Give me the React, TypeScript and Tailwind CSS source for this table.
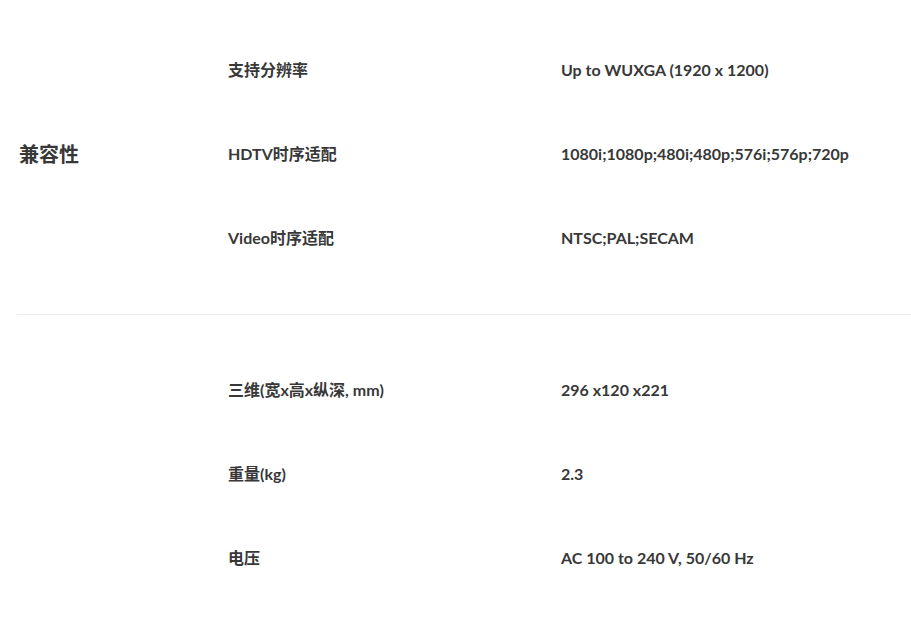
import React from 'react';

interface SpecRow {
    name: string;
    value: string;
}

interface SpecSection {
    title: string;
    rows: SpecRow[];
}

const sections: SpecSection[] = [
    {
        title: '兼容性',
        rows: [
            { name: '支持分辨率', value: 'Up to WUXGA (1920 x 1200)' },
            { name: 'HDTV时序适配', value: '1080i;1080p;480i;480p;576i;576p;720p' },
            { name: 'Video时序适配', value: 'NTSC;PAL;SECAM' },
        ],
    },
    {
        title: '',
        rows: [
            { name: '三维(宽x高x纵深, mm)', value: '296 x120 x221' },
            { name: '重量(kg)', value: '2.3' },
            { name: '电压', value: 'AC 100 to 240 V, 50/60 Hz' },
        ],
    },
];

const font = { fontFamily: 'Lato, "Noto Sans CJK SC", sans-serif' };

function Section({ section, first }: { section: SpecSection; first: boolean }) {
    return (
        <div className={`flex ${first ? 'pt-[28px] pb-[34px] border-b border-[#ebebeb]' : 'pt-[33px]'}`}>
            <div className="w-[211px] shrink-0 flex items-center pl-[2px]">
                <h3 className="text-[20px] font-bold text-[#383838]">{section.title}</h3>
            </div>
            <div className="flex-1">
                {section.rows.map((row) => (
                    <div key={row.name} className="h-[84px] flex items-center">
                        <div className="w-[333px] shrink-0 text-[16px] font-bold text-[#383838]">{row.name}</div>
                        <div className="flex-1 text-[16px] font-bold text-[#383838]">{row.value}</div>
                    </div>
                ))}
            </div>
        </div>
    );
}

export default function App() {
    return (
        <div className="w-[911px] h-[618px] bg-white overflow-hidden pl-[17px]" style={font}>
            {sections.map((s, i) => (
                <Section key={i} section={s} first={i === 0} />
            ))}
        </div>
    );
}
